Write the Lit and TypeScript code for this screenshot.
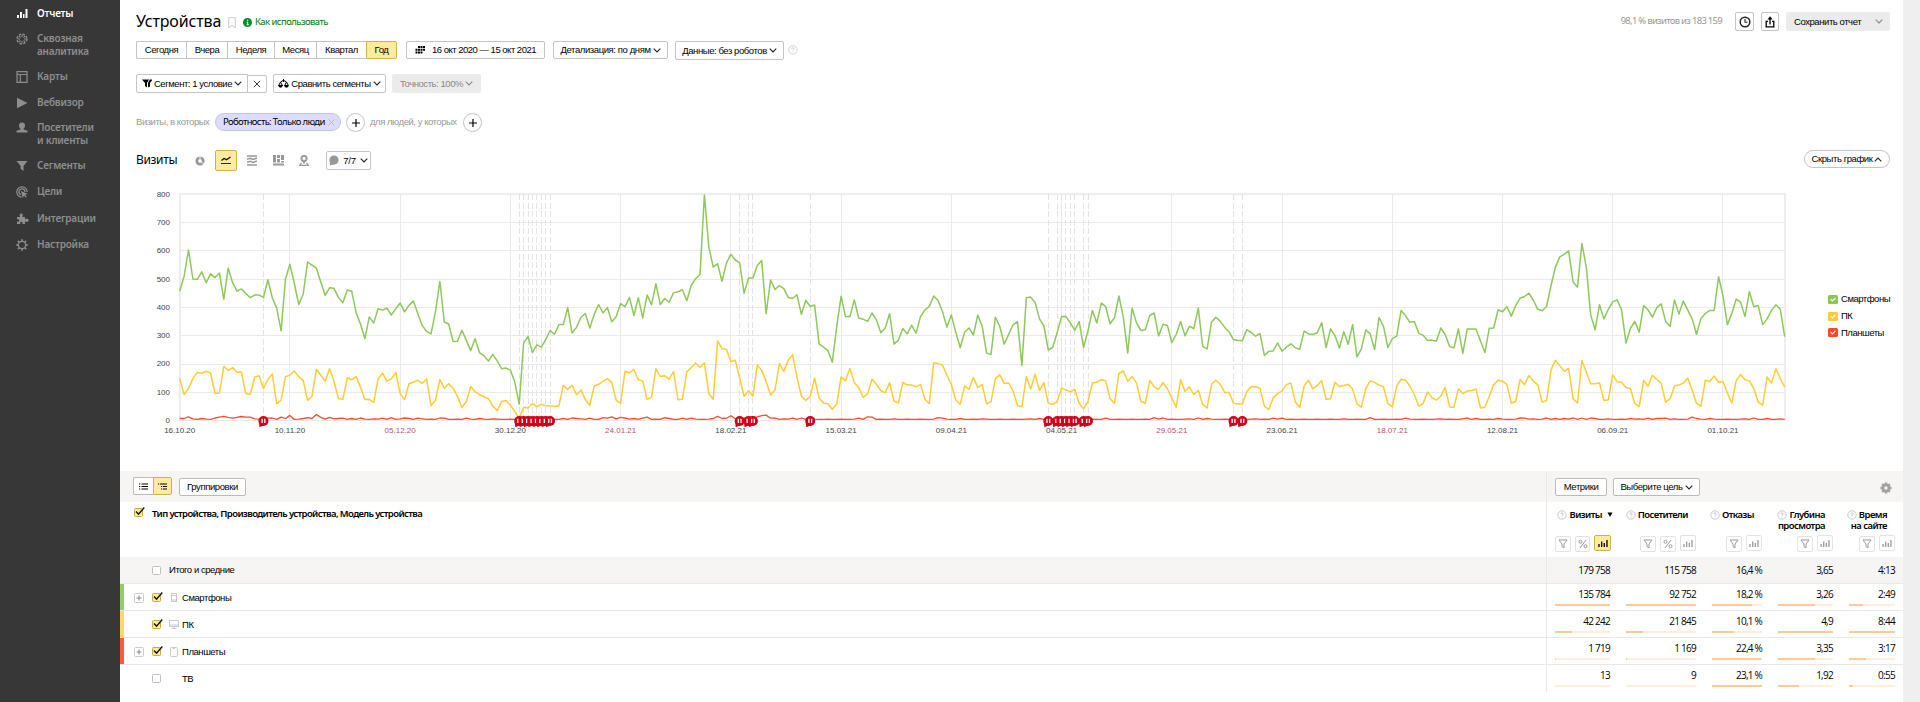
import { LitElement, html, svg, css, nothing } from "lit";

const PHONES = [
  457,510,602,500,499,525,487,518,505,521,429,538,487,457,465,449,434,443,443,435,497,434,397,317,500,
  552,484,410,447,560,549,538,489,442,469,467,435,416,461,457,381,341,289,366,345,395,390,397,372,396,
  415,384,407,422,378,336,315,306,383,491,348,341,279,280,319,284,247,289,240,229,210,234,211,183,185,
  178,135,58,273,297,240,267,259,286,318,305,339,339,399,309,329,365,378,327,375,410,380,399,349,367,
  413,402,435,371,434,363,443,409,483,410,431,418,451,455,462,423,477,501,516,797,614,542,554,492,557,
  587,567,557,449,504,504,548,565,377,496,463,477,466,435,431,444,375,425,403,408,271,259,247,206,331,
  439,367,367,426,362,358,350,380,356,310,327,377,270,284,325,306,336,309,367,391,403,440,424,385,330,
  373,313,258,312,327,302,373,333,238,233,365,332,270,305,338,349,194,434,436,417,359,334,249,258,311,
  367,367,344,319,349,258,317,389,344,415,402,342,363,440,365,239,397,345,318,321,371,380,299,340,336,
  275,304,350,299,333,325,397,261,253,347,365,350,329,313,286,283,283,321,311,298,307,230,244,246,274,
  245,259,271,257,252,316,306,304,310,346,258,324,301,256,314,269,339,225,253,321,306,251,364,333,258,
  289,298,389,371,347,350,309,301,283,284,280,327,304,261,257,324,237,323,323,323,281,240,326,327,391,
  384,403,369,406,432,438,450,424,393,388,403,477,542,578,587,600,489,471,625,542,373,320,409,359,393,
  419,426,391,274,325,350,312,406,391,365,399,412,350,332,426,376,422,391,359,305,360,378,389,389,508,
  440,339,378,429,418,367,455,402,406,339,359,389,409,393,296,
];

const DESKTOPS = [
  148,92,113,148,170,167,174,168,95,97,191,177,187,170,171,95,93,153,158,113,145,164,59,72,155,
  160,175,154,142,71,86,181,160,139,183,139,78,75,151,144,155,118,74,75,64,146,167,139,147,170,
  95,74,130,135,142,131,147,53,71,145,114,130,114,85,46,66,120,102,91,84,77,51,35,67,71,
  54,31,8,47,44,60,49,57,52,52,49,52,124,110,124,91,108,74,53,122,128,138,148,134,71,
  60,174,168,181,144,140,75,81,183,155,158,145,173,73,75,172,187,203,187,204,95,75,281,254,251,
  208,213,150,86,105,86,196,177,138,90,108,201,174,213,233,152,86,71,85,150,80,61,59,40,58,
  154,141,184,134,117,82,94,146,128,106,98,133,69,62,135,126,125,119,128,75,60,204,201,196,159,
  128,73,57,122,110,152,117,127,59,66,148,161,131,132,104,53,48,155,111,164,106,134,61,57,68,
  114,108,101,110,60,41,67,133,135,145,140,77,61,166,175,139,155,133,67,61,142,119,110,134,112,
  78,47,145,102,119,92,107,57,44,128,142,128,99,99,61,58,58,102,119,119,114,51,39,80,95,
  105,127,133,66,46,122,142,112,124,141,75,77,135,120,124,128,111,59,47,113,140,135,125,119,60,
  48,122,146,142,122,92,51,60,101,81,72,86,117,48,47,112,95,104,106,111,44,47,86,127,142,
  139,128,62,67,145,127,159,139,126,65,71,178,213,194,174,184,77,62,212,171,130,130,133,71,73,
  161,137,135,117,113,60,49,142,121,160,145,131,65,77,122,125,132,150,108,61,51,142,138,157,135,
  138,97,61,140,163,144,140,113,65,54,154,132,183,148,119,
];

const TABLET_PEAKS: Record<number, number> = {
  0: 7, 1: 7, 2: 13, 3: 6, 5: 7, 8: 9, 9: 12, 10: 15, 11: 11, 12: 8, 13: 11, 14: 14, 15: 12, 16: 12, 17: 6, 20: 8, 21: 9,
  23: 12, 24: 7, 25: 18, 28: 7, 29: 10, 30: 7, 31: 21, 32: 11, 34: 11, 35: 6, 36: 7, 37: 8, 39: 7, 41: 9, 44: 6, 46: 8, 48: 10,
  50: 6, 51: 9, 52: 7, 54: 8, 55: 6, 59: 9, 60: 8, 65: 8, 68: 7, 71: 6, 79: 9, 83: 8, 87: 7, 89: 9, 90: 7, 91: 6, 93: 8, 96: 10,
  97: 8, 98: 13, 99: 6, 100: 11, 101: 9, 103: 7, 105: 8, 106: 12, 110: 10, 111: 7, 114: 8, 116: 8, 121: 7, 122: 15, 123: 7, 124: 8,
  125: 17, 126: 6, 128: 9, 130: 8, 131: 13, 132: 17, 133: 19, 134: 8, 135: 8, 137: 6, 139: 8, 141: 9, 143: 8, 154: 8, 156: 13, 157: 12,
  162: 6, 172: 10, 173: 8, 177: 7, 182: 6, 193: 6, 195: 7, 201: 6, 210: 8, 221: 10, 223: 9, 229: 6, 231: 9, 233: 7, 244: 6, 248: 8,
  250: 8, 264: 6, 270: 10, 278: 8, 286: 6, 291: 6, 292: 8, 294: 7, 299: 7, 304: 9, 305: 8, 307: 6, 310: 9, 312: 7, 314: 7, 316: 9,
  318: 9, 320: 9, 321: 7, 324: 6, 329: 7, 331: 6, 333: 8, 335: 7, 336: 7, 337: 8, 339: 6, 343: 12, 344: 7, 347: 7, 355: 6, 357: 9,
  360: 7, 363: 6,
};
const TABLETS = PHONES.map((_, day) => TABLET_PEAKS[day] ?? (day % 3 === 0 ? 5 : 4));

const EVENTS = [19, 77, 78, 79, 80, 81, 82, 83, 84, 127, 129, 130, 143, 197, 199, 200, 201, 202, 203, 205, 206, 239, 241];

const TICKS: [string, boolean][] = [
  ["16.10.20", false], ["10.11.20", false], ["05.12.20", true], ["30.12.20", false], ["24.01.21", true],
  ["18.02.21", false], ["15.03.21", false], ["09.04.21", false], ["04.05.21", false], ["29.05.21", true],
  ["23.06.21", false], ["18.07.21", true], ["12.08.21", false], ["06.09.21", false], ["01.10.21", false],
];

// Chart geometry, relative to the chart's own top-left corner
const LEFT = 43.7;
const TOP = 14;
const STEP = 1605 / 364;
const BASE = 240.5;
const UNIT = 0.283;
const px = (day: number) => LEFT + day * STEP;
const py = (v: number) => BASE - v * UNIT;
const gridY = (v: number) => Math.round(py(v) - 0.4) + 0.5;
const line = (data: number[]) => data.map((v, i) => `${px(i).toFixed(1)},${py(v).toFixed(1)}`).join(" ");

const chevron = html`<svg class="chev" width="8" height="5" viewBox="0 0 8 5"><path d="M.7 .7 4 4 7.3 .7" /></svg>`;
const chevronUp = html`<svg class="chev" width="8" height="5" viewBox="0 0 8 5"><path d="M.7 4.3 4 1 7.3 4.3" /></svg>`;
const help = html`<svg class="help" width="10" height="10" viewBox="0 0 10 10"><circle cx="5" cy="5" r="4.2" /><path d="M3.7 4.1Q3.8 2.8 5 2.8T6.2 4Q6.2 4.6 5 5.3V6M5 6.8v.8" /></svg>`;
const plus = html`<svg width="10" height="10" viewBox="0 0 10 10"><path d="M5 1v8M1 5h8" stroke="#000" stroke-width="1.2" /></svg>`;
const funnel = html`<svg width="10" height="10" viewBox="0 0 10 10"><path d="M1 1h8L6 5v4L4 7.5V5z" fill="none" stroke="#999" /></svg>`;
const percent = html`<svg width="10" height="10" viewBox="0 0 10 10" fill="none" stroke="#999"><circle cx="2.5" cy="2.8" r="1.5" /><circle cx="7.5" cy="7.2" r="1.5" /><path d="M8 1 2 9" /></svg>`;
const bars = (c: string) => html`<svg width="10" height="8" viewBox="0 0 10 8"><path d="M1 8V5M3.7 8V2.5M6.3 8V4M9 8V1" stroke="${c}" stroke-width="1.3" /></svg>`;

const menuIcons: Record<string, unknown> = {
  reports: svg`<path d="M1 7h2v3H1zM4 4h2v6H4zM7 6h1.500v4H7zM9.500 1H11.500v9H9.500z"/>`,
  cross: svg`<g fill="none" stroke="currentColor" stroke-width="1.500"><circle cx="6" cy="6" r="4.900" stroke-dasharray="2.300 1.550"/><path d="M6 1.500v2.600M6 7.900v2.600M1.500 6h2.600M7.900 6h2.600M2.800 2.800l1.700 1.700M7.500 7.500l1.700 1.700M9.200 2.800 7.500 4.500M4.500 7.500 2.800 9.200" stroke-width="1.100"/></g>`,
  maps: svg`<path d="M1 .7h10v10.600H1zM1 3.500h10M4.300 3.500v7.800" fill="none" stroke="currentColor" stroke-width="1.200"/>`,
  play: svg`<path d="M1 .8 11.500 6 1 11.200z"/>`,
  user: svg`<path d="M6 .5c2 0 3 1.200 3 2.900C9 5 8.300 6 7.500 6.600v1l4 1.200V10.500H.5V8.800l4-1.200v-1C3.700 6 3 5 3 3.400 3 1.700 4 .5 6 .5z"/>`,
  segments: svg`<path d="M.5 1h11L7.500 6v5L4.700 8.900V6z"/>`,
  goals: svg`<g fill="none" stroke="currentColor" stroke-width="1.200"><path d="M5.500 11.200A5.200 5.200 0 1 1 11.200 6"/><path d="M5 8.700A3 3 0 1 1 9 6"/></g><path d="M5 5l6.800 3-2.700.8 1.700 2.200-1 .7-1.700-2.200L6.700 12z"/>`,
  puzzle: svg`<path d="M1 4h3.200C3 2 3.800.5 5.200.5S7.400 2 6.300 4H9v2.200c2-1 3.700-.3 3.700 1.100S11 9.500 9 8.500V11H6.300c.8-1.500.1-2.300-.9-2.300S3.700 9.500 4.500 11H1V8.500c1.600.5 2.200-.2 2.200-1.100S2.600 5.800 1 6.300z"/>`,
  gear: svg`<circle cx="6" cy="6" r="3.700" fill="none" stroke="currentColor" stroke-width="1.300"/><path d="M6 2V.2M6 10v1.800M2 6H.2M10 6h1.800M3.200 3.200 1.900 1.900M8.800 8.800l1.300 1.300M8.800 3.200l1.300-1.300M3.200 8.800 1.900 10.100" stroke="currentColor" stroke-width="1.700"/>`,
};

const MENU: [string, string[]][] = [
  ["reports", ["Отчеты"]], ["cross", ["Сквозная", "аналитика"]], ["maps", ["Карты"]], ["play", ["Вебвизор"]],
  ["user", ["Посетители", "и клиенты"]], ["segments", ["Сегменты"]], ["goals", ["Цели"]],
  ["puzzle", ["Интеграции"]], ["gear", ["Настройка"]],
];

const COLUMNS = [
  { title: ["Визиты"], sorted: true, percent: true },
  { title: ["Посетители"], percent: true },
  { title: ["Отказы"] },
  { title: ["Глубина", "просмотра"] },
  { title: ["Время", "на сайте"] },
] as { title: string[]; sorted?: boolean; percent?: boolean }[];

const deviceIcons: Record<string, unknown> = {
  phone: svg`<rect x="2.500" y=".5" width="5" height="8"/><path d="M2.500 2.500h5M2.500 7h5"/>`,
  desktop: svg`<path d="M.5 .5h9v6h-9zM.5 5h9M5 6.500v2M2.500 8.500h5"/>`,
  tablet: svg`<rect x="1.500" y=".5" width="7" height="9" rx="1"/><path d="M4 1.500h2M4.500 8h1"/>`,
};

interface Row { name: string; stripe: string; expand: boolean; checked: boolean; icon?: string; cells: string[]; shares: number[]; }
const ROWS: Row[] = [
  { name: "Смартфоны", stripe: "green", expand: true, checked: true, icon: "phone", cells: ["135 784", "92 752", "18,2 %", "3,26", "2:49"], shares: [100, 100, 80, 67, 30] },
  { name: "ПК", stripe: "yellow", expand: false, checked: true, icon: "desktop", cells: ["42 242", "21 845", "10,1 %", "4,9", "8:44"], shares: [31, 24, 44, 100, 100] },
  { name: "Планшеты", stripe: "red", expand: true, checked: true, icon: "tablet", cells: ["1 719", "1 169", "22,4 %", "3,35", "3:17"], shares: [1.5, 1.3, 98, 67, 37] },
  { name: "ТВ", stripe: "none", expand: false, checked: false, cells: ["13", "9", "23,1 %", "1,92", "0:55"], shares: [0, 0, 100, 38, 9] },
];

class SideMenu extends LitElement {
  static styles = css`
    :host { display: block; width: 120px; height: 702px; background: #373737; box-sizing: border-box; padding-top: 7px; flex: none; }
    .item { display: grid; grid-template-columns: 12px 1fr; column-gap: 9px; padding-left: 16px; margin-bottom: 12px; color: #8e8e8e;
      font: 600 10px/13px "Noto Sans", sans-serif; letter-spacing: -.2px; }
    .item svg { display: block; margin-top: 1px; overflow: visible; }
    .item.active { color: #fff; }
    .label { white-space: nowrap; }
    .line { display: block; }
    .i2, .i5, .i7 { margin-bottom: 13px; }
    .i6 { margin-bottom: 14px; }
  `;
  render() {
    return MENU.map(([icon, lines], i) => html`
      <div class="item i${i} ${i === 0 ? "active" : ""}">
        <svg width="12" height="12" viewBox="0 0 12 12" fill="currentColor">${menuIcons[icon]}</svg>
        <span class="label">${lines.map((l) => html`<span class="line">${l}</span>`)}</span>
      </div>`);
  }
}
customElements.define("side-menu", SideMenu);

class VisitsChart extends LitElement {
  static styles = css`
    :host { display: block; width: 1664px; height: 280px; flex: none; }
    svg { display: block; overflow: visible; }
    .axis { font: 8px "Liberation Sans", Arial, sans-serif; fill: #444; }
    .off { fill: #b8536a; }
    .grid { stroke: #eaeaea; shape-rendering: crispEdges; }
    .frame { stroke: #eeeeee; stroke-width: 2; fill: none; shape-rendering: crispEdges; }
    .event { stroke: #e4e4e4; stroke-dasharray: 6 2.5; shape-rendering: crispEdges; }
    .series { fill: none; stroke-width: 1.5; stroke-linejoin: round; }
    .phones { stroke: #8cc85a; }
    .desktops { stroke: #ffcc33; }
    .tablets { stroke: #ff4b2b; stroke-width: 1.3; }
    .pin { fill: #d0021b; }
    .bar { fill: #fff; }
  `;
  render() {
    const end = px(364);
    return html`<svg width="1664" height="280" viewBox="0 0 1664 280">
      ${[0, 1, 2, 3, 4, 5, 6, 7].map((n) => svg`
        <line class="grid" x1=${LEFT} x2=${end} y1=${gridY(n * 100)} y2=${gridY(n * 100)}></line>`)}
      ${[0, 1, 2, 3, 4, 5, 6, 7, 8].map((n) => svg`
        <text class="axis" x="34" y=${py(n * 100) + 2.5} text-anchor="end">${n * 100}</text>`)}
      <path class="frame" d="M${LEFT} ${BASE}V${TOP}H${end}V${BASE}"></path>
      ${TICKS.map((_, i) => svg`
        <line class="grid" x1=${px(i * 25)} x2=${px(i * 25)} y1=${TOP} y2=${BASE}></line>`)}
      ${EVENTS.map((d) => svg`<line class="event" x1=${px(d)} x2=${px(d)} y1=${TOP} y2=${BASE}></line>`)}
      <polyline class="series tablets" points=${line(TABLETS)}></polyline>
      <polyline class="series desktops" points=${line(DESKTOPS)}></polyline>
      <polyline class="series phones" points=${line(PHONES)}></polyline>
      ${EVENTS.map((d) => svg`<g transform="translate(${px(d)} 241)">
        <circle class="pin" r="5"></circle><path class="pin" d="M-4.500 1-4 6.200 0 4.500z"></path>
        <path class="bar" d="M-2-2.200h1.300v4.200H-2zM.7-2.200H2v4.200H.7z"></path></g>`)}
      ${TICKS.map(([t, off], i) => svg`
        <text class="axis ${off ? "off" : ""}" x=${px(i * 25)} y="253" text-anchor="middle">${t}</text>`)}
    </svg>`;
  }
}
customElements.define("visits-chart", VisitsChart);

class DeviceTable extends LitElement {
  static styles = css`
    :host { display: block; font: 9.5px/12px "Noto Sans", sans-serif; color: #000; letter-spacing: -.5px; }
    .row { display: grid; grid-template-columns: 1426px 357px; box-sizing: border-box; }
    .row > div { box-sizing: border-box; }
    .side { border-left: 1px solid #e8e8e8; }
    .tools { height: 31px; background: #f6f5f3; }
    .tools > div { display: flex; align-items: flex-start; padding-top: 7px; }
    .tools .main { padding: 6px 0 0 13px; }
    .tools .side { padding-left: 8px; }
    .btn { box-sizing: border-box; height: 18px; border: 1px solid #bbb; border-radius: 2px; background: #fff; display: flex; align-items: center; justify-content: center;
      font: 9.5px/16px "Liberation Sans", Arial, sans-serif; letter-spacing: -.4px; white-space: nowrap; }
    .list { width: 20px; border-radius: 2px 0 0 2px; border-right: 0; }
    .tree { width: 19px; background: #ffeba0; border-color: #ccb350; border-radius: 0 2px 2px 0; }
    .groups { width: 67px; margin: 1px 0 0 7px; }
    .metrics { width: 52px; }
    .goal { width: 87px; margin-left: 6px; gap: 2px; }
    .chev path { fill: none; stroke: #222; stroke-width: 1.1; }
    .gear { margin: 4px 11px 0 auto; display: block; }
    .head { height: 55px; }
    .head .main { display: flex; padding: 6px 0 0 14px; gap: 9px; font-weight: 600; letter-spacing: -.6px; white-space: nowrap; }
    .metricsgrid { display: grid; grid-template-columns: 55px 70px 50px 55px 46px; column-gap: 16px; padding-left: 8px; }
    .th { height: 55px; display: flex; flex-direction: column; justify-content: space-between; box-sizing: border-box; padding: 7px 0 5px; }
    .title { font: 600 9.5px/11px "Noto Sans", sans-serif; letter-spacing: -.56px; text-align: right; padding-right: 8px; white-space: nowrap; display: flex; flex-direction: column; align-items: flex-end; }
    .first { display: flex; align-items: center; gap: 2px; }
    .arrow { width: 0; margin-left: -2px; overflow: visible; }
    .arrow svg { display: block; margin-left: 5px; }
    .help { fill: none; stroke: #bcbcbc; stroke-width: .8; flex: none; }
    .icons { display: flex; justify-content: flex-end; gap: 4px; align-items: flex-end; }
    .ib { width: 16px; height: 16px; border: 1px solid #e3e3e3; border-radius: 2px; display: flex; align-items: center; justify-content: center; box-sizing: border-box; }
    .ib.up { margin-bottom: 1px; }
    .ib.on { background: #ffeba0; border-color: #ccb350; width: 17px; margin-right: -1px; }
    .total { height: 27px; background: #f6f5f3; border-bottom: 1px solid #e8e8e8; }
    .data { height: 27px; border-bottom: 1px solid #e8e8e8; }
    .data.last { border-bottom: 0; }
    .name { display: flex; align-items: center; height: 26px; letter-spacing: -.44px; font-family: "Liberation Sans", Arial, sans-serif; }
    .data .name { padding-top: 1px; }
    .total .name { padding-left: 32px; gap: 8px; }
    .stripe { width: 4px; height: 26px; margin: -1px 10px 0 0; }
    .green { background: #97cc64; } .yellow { background: #ffd963; } .red { background: #ff5a3c; }
    .exp { width: 10px; height: 10px; box-sizing: border-box; border: 1px solid #ccc; border-radius: 1.5px; margin-right: 8px; display: flex; }
    .exp.hide { visibility: hidden; }
    .box { width: 9px; height: 9px; box-sizing: border-box; border: 1px solid #bfbfbf; border-radius: 1.5px; background: #fff; flex: none; }
    .box.on { background: #ffeba0; border-color: #c9a93c; }
    .box svg { display: block; overflow: visible; }
    .dev { width: 10px; margin: 0 3px 0 8px; display: block; fill: none; stroke: #c9c9c9; flex: none; }
    .cell { text-align: right; white-space: nowrap; padding-top: 4px; font: 10px/12px "Open Sans", "Noto Sans", sans-serif; letter-spacing: -.72px; word-spacing: -.2px; }
    .total .cell { padding-top: 7px; }
    .track { height: 2px; background: #ffeeda; margin-top: 4px; }
    .fill { height: 2px; background: #ffca94; }
  `;
  box(on: boolean) {
    return html`<div class="box ${on ? "on" : ""}">${on ? html`<svg width="7" height="7" viewBox="0 0 7 7"><path d="M1 2.500 3.500 5.300 9.300-1.500" fill="none" stroke="#111" stroke-width="1.400" /></svg>` : nothing}</div>`;
  }
  render() {
    return html`
      <div class="row tools">
        <div class="main">
          <div class="btn list"><svg width="9" height="7" viewBox="0 0 9 7"><path d="M0 1h1.200M2.500 1H9M0 3.500h1.200M2.500 3.500H9M0 6h1.200M2.500 6H9" stroke="#000" /></svg></div>
          <div class="btn tree"><svg width="9" height="7" viewBox="0 0 9 7"><path d="M0 1h1.200M2 1H9M3 3.500h1.200M5 3.500H9M3 6h1.200M5 6H9" stroke="#000" /></svg></div>
          <div class="btn groups">Группировки</div>
        </div>
        <div class="side">
          <div class="btn metrics">Метрики</div>
          <div class="btn goal">Выберите цель ${chevron}</div>
          <svg class="gear" width="12" height="12" viewBox="0 0 12 12"><circle cx="6" cy="6" r="3.100" fill="none" stroke="#a0a0a0" stroke-width="2.800" /><path d="M6 2V.5M6 10v1.500M2 6H.5M10 6h1.500M3.200 3.200 2.100 2.100M8.800 8.800l1.100 1.100M8.800 3.200l1.100-1.100M3.200 8.800 2.100 9.900" stroke="#a0a0a0" stroke-width="2.300" /></svg>
        </div>
      </div>
      <div class="row head">
        <div class="main">${this.box(true)}<span>Тип устройства, Производитель устройства, Модель устройства</span></div>
        <div class="side metricsgrid">
          ${COLUMNS.map((c) => html`<div class="th">
            <div class="title">
              <span class="first">${help}<span>${c.title[0]}</span>${c.sorted ? html`<span class="arrow"><svg width="6" height="5" viewBox="0 0 6 5"><path d="M.5 .5h5L3 5z" /></svg></span>` : nothing}</span>
              ${c.title[1] ? html`<span>${c.title[1]}</span>` : nothing}
            </div>
            <div class="icons">
              <div class="ib">${funnel}</div>
              ${c.percent ? html`<div class="ib">${percent}</div>` : nothing}
              <div class="ib up ${c.sorted ? "on" : ""}">${bars(c.sorted ? "#000" : "#999")}</div>
            </div>
          </div>`)}
        </div>
      </div>
      <div class="row total">
        <div class="name">${this.box(false)}<span>Итого и средние</span></div>
        <div class="side metricsgrid">${["179 758", "115 758", "16,4 %", "3,65", "4:13"].map((v) => html`<div class="cell">${v}</div>`)}</div>
      </div>
      ${ROWS.map((r, i) => html`<div class="row data ${i === 3 ? "last" : ""}">
        <div class="name">
          <div class="stripe ${r.stripe}"></div>
          <div class="exp ${r.expand ? "" : "hide"}"><svg width="8" height="8" viewBox="0 0 8 8"><path d="M4 1.500v5M1.500 4h5" stroke="#888" /></svg></div>
          ${this.box(r.checked)}
          <svg class="dev" width="10" height="10" viewBox="0 0 10 10">${r.icon ? deviceIcons[r.icon] : nothing}</svg>
          <span>${r.name}</span>
        </div>
        <div class="side metricsgrid">${r.cells.map((v, k) => html`<div class="cell">${v}<div class="track"><div class="fill" style="width:${r.shares[k]}%"></div></div></div>`)}</div>
      </div>`)}
    `;
  }
}
customElements.define("device-table", DeviceTable);

class AppRoot extends LitElement {
  static styles = css`
    :host { display: flex; width: 1920px; height: 702px; overflow: hidden; background: #efefef; font: 9.5px/16px "Liberation Sans", Arial, sans-serif; color: #000; }
    .page { width: 1783px; height: 702px; background: #fff; }
    .bar { display: flex; align-items: flex-start; box-sizing: border-box; padding-left: 16px; padding-right: 13px; white-space: nowrap; }
    .top { height: 41px; padding-top: 12px; }
    h1 { margin: -2px 7px 0 0; font: 400 16px/22px "Noto Sans", sans-serif; letter-spacing: -.15px; width: 85px; }
    .mark { margin: 5px 7px 0 0; }
    .info { margin: 6px 3px 0 0; }
    .how { color: #007a00; font: 9.5px/12px "Noto Sans", sans-serif; letter-spacing: -.55px; margin-top: 4px; }
    .count { margin-left: auto; color: #999; font: 9.5px/18px "Noto Sans", sans-serif; letter-spacing: -.72px; margin-right: 13px; }
    .btn { box-sizing: border-box; height: 18px; border: 1px solid #c4c4c4; border-radius: 2px; display: flex; align-items: center; justify-content: center; letter-spacing: -.43px; gap: 2px; background: #fff; flex: none; }
    .h19 { height: 19px; }
    .sq { width: 19px; margin-right: 7px; }
    .share { width: 18px; }
    .gray { background: #ebebeb; border-color: #ebebeb; }
    .save { width: 104px; justify-content: space-between; padding: 0 6px 0 7px; }
    .save .chev path, .dim .chev path { stroke: #888; }
    .chev path { fill: none; stroke: #222; stroke-width: 1.1; }
    .periods { height: 33px; }
    .seg { border-right-width: 0; border-radius: 0; }
    .p0 { width: 50px; border-radius: 2px 0 0 2px; } .p1 { width: 41px; } .p2 { width: 47px; } .p3 { width: 42px; } .p4 { width: 50px; }
    .p5 { width: 31px; background: #ffeba0; border: 1px solid #ccb350; border-radius: 0 2px 2px 0; margin-right: 9px; }
    .date { width: 139px; gap: 7px; letter-spacing: -.5px; margin-right: 8px; }
    .detail { width: 115px; margin-right: 7px; letter-spacing: -.4px; }
    .robots { width: 109px; margin-right: 4px; }
    .help { fill: none; stroke: #c8c8c8; stroke-width: .8; margin-top: 4px; }
    .filters { height: 39px; }
    .segment { width: 112px; border-radius: 2px 0 0 2px; letter-spacing: -.45px; }
    .close { width: 20px; height: 18px; margin: 1px 6px 0 -1px; border-radius: 0 2px 2px 0; }
    .compare { width: 113px; margin-right: 6px; }
    .dim { width: 89px; color: #888; }
    .conds { height: 37px; color: #999; line-height: 18px; letter-spacing: -.46px; }
    .pill { box-sizing: border-box; height: 18px; width: 126px; border-radius: 9px; border: 1px solid #c5c2f0; background: #dddcff; color: #000; display: flex; align-items: center; padding: 0 5px 0 7px; justify-content: space-between; font: 9.5px/16px "Noto Sans", sans-serif; letter-spacing: -.65px; margin: 0 5px; }
    .add { box-sizing: border-box; width: 19px; height: 19px; border: 1px solid #c4c4c4; border-radius: 50%; display: flex; align-items: center; justify-content: center; }
    .w74 { width: 74px; } .w86 { width: 86px; margin: 0 7px 0 5px; }
    .view { height: 30px; }
    h2 { margin: 0; font: 400 12px/20px "Noto Sans", sans-serif; letter-spacing: -.35px; width: 53px; }
    .vi { width: 22px; height: 21px; display: flex; align-items: center; justify-content: center; margin-right: 4px; }
    .vi.on { box-sizing: border-box; background: #ffeba0; border: 1px solid #ccb350; border-radius: 2px; }
    .notes { width: 45px; height: 19px; margin: 1px 0 0 7px; gap: 4px; letter-spacing: -.2px; }
    .hide { width: 86px; border-radius: 9px; margin-left: auto; }
    .plot { display: flex; height: 291px; padding-left: 16px; box-sizing: border-box; }
    .legend { margin: 111px 0 0 28px; }
    .li { display: flex; align-items: center; gap: 3px; height: 16.7px; letter-spacing: -.47px; }
    .sw { width: 10px; height: 9px; border-radius: 1.5px; display: flex; justify-content: center; align-items: center; flex: none; }
    .g { background: #8cc656; } .y { background: #ffcc33; } .r { background: #ff4728; }
  `;
  render() {
    const periods = ["Сегодня", "Вчера", "Неделя", "Месяц", "Квартал", "Год"];
    return html`
      <side-menu></side-menu>
      <main class="page">
        <div class="bar top">
          <h1>Устройства</h1>
          <svg class="mark" width="8" height="12" viewBox="0 0 8 12"><path d="M.7 .7h6.600V11L4 8 .7 11z" fill="none" stroke="#ccc" /></svg>
          <svg class="info" width="9" height="9" viewBox="0 0 9 9"><circle cx="4.500" cy="4.500" r="4.500" fill="#078a2e" /><path d="M4.700 1.700v1.200M3.700 4h1v3M3.500 6.800h2.300" fill="none" stroke="#fff" /></svg>
          <span class="how">Как использовать</span>
          <span class="count">98,1 % визитов из 183 159</span>
          <div class="btn h19 sq"><svg width="12" height="12" viewBox="0 0 12 12" fill="none" stroke="#222"><circle cx="6" cy="6" r="4.800" stroke-width="1.500" /><path d="M6 3v3.300h2.500" stroke-width="1.100" /></svg></div>
          <div class="btn h19 sq share"><svg width="10" height="12" viewBox="0 0 10 12" fill="none" stroke="#000" stroke-width="1.300"><path d="M3 5.300H1.200v5.500h7.600V5.300H7M5 8.500V2" /><path d="M2.500 3.500 5 .3l2.500 3.200z" fill="#000" stroke="none" /></svg></div>
          <div class="btn h19 gray save">Сохранить отчет ${chevron}</div>
        </div>
        <div class="bar periods">
          ${periods.map((p, i) => html`<div class="btn seg p${i}">${p}</div>`)}
          <div class="btn date"><svg width="10" height="8" viewBox="0 0 10 8"><path d="M3 0h2v2H3zM5.500 0h2v2h-2zM8 0h2v2H8zM.5 2.700h2v2h-2zM3 2.700h2v2H3zM5.500 2.700h2v2h-2zM8 2.700h2v2H8zM.5 5.400h2v2h-2zM3 5.400h2v2H3zM5.500 5.400h2v2h-2z" /></svg>16 окт 2020 — 15 окт 2021</div>
          <div class="btn detail">Детализация: по дням ${chevron}</div>
          <div class="btn h19 robots">Данные: без роботов ${chevron}</div>
          ${help}
        </div>
        <div class="bar filters">
          <div class="btn h19 segment"><svg width="10" height="9" viewBox="0 0 10 9"><path d="M0 .5h7L5 4v4.500L3 7V4zM7.800 .5H10v1L8 4v3.500L6 8.500V4z" /></svg>Сегмент: 1 условие ${chevron}</div>
          <div class="btn close"><svg width="8" height="8" viewBox="0 0 8 8"><path d="M.8 .8l6.400 6.400M7.200 .8.8 7.200" stroke="#222" stroke-width=".9" /></svg></div>
          <div class="btn h19 compare"><svg width="11" height="9" viewBox="0 0 11 9"><path d="M2.500 3 .7 6.500h3.600zM8.500 3 6.700 6.500h3.600zM2.500 3l3-1.800 3 1.800M5.500 0v3" fill="none" stroke="#000" /><path d="M.2 6h4.600Q4.500 8.700 2.500 8.700T.2 6zM6.200 6h4.600Q10.500 8.700 8.500 8.700T6.200 6z" /></svg>Сравнить сегменты ${chevron}</div>
          <div class="btn h19 gray dim">Точность: 100% ${chevron}</div>
        </div>
        <div class="bar conds">
          <span class="w74">Визиты, в которых</span>
          <span class="pill">Роботность: Только люди <svg width="7" height="7" viewBox="0 0 7 7"><path d="M.5 .5l6 6M6.500 .5l-6 6" stroke="#aaa9cf" stroke-width=".8" /></svg></span>
          <span class="add">${plus}</span>
          <span class="w86">для людей, у которых</span>
          <span class="add">${plus}</span>
        </div>
        <div class="bar view">
          <h2>Визиты</h2>
          <div class="vi"><svg width="10" height="10" viewBox="0 0 10 10"><circle cx="5" cy="5" r="3.200" fill="none" stroke="#999" stroke-width="2.800" /><path d="M5 5V0M5 5 9.500 8.500" stroke="#fff" stroke-width=".9" /></svg></div>
          <div class="vi on"><svg width="10" height="9" viewBox="0 0 10 9" fill="none" stroke="#111"><path d="M.5 4.500 3 2.500l2.500 1.200L9.500 1" stroke-width="1.300" /><path d="M0 7.500h10" stroke-width=".9" /></svg></div>
          <div class="vi"><svg width="10" height="11" viewBox="0 0 10 11" fill="none" stroke="#999" stroke-width="1.500"><path d="M0 1h10M0 4.200l3-.9 3 1.200 4-1.500M0 7.200l3-.9 3 1.200L10 6M0 10h10" /></svg></div>
          <div class="vi"><svg width="11" height="11" viewBox="0 0 11 11"><path d="M0 0h3v7.500H0zM4 0h3v3H4zM4 4h3v3.500H4zM8 0h3v5H8zM8 6h3v1.500H8zM0 8.500h11v2H0z" fill="#999" /></svg></div>
          <div class="vi"><svg width="10" height="11" viewBox="0 0 10 11" fill="none" stroke="#999"><circle cx="5" cy="3.500" r="2.600" stroke-width="1.900" /><path d="M5 6v2.500" stroke-width="2.200" /><path d="M2.500 7.800.8 10.300h8.400L7.500 7.800" stroke-width="1.200" /></svg></div>
          <div class="btn notes"><svg width="10" height="11" viewBox="0 0 10 11"><circle cx="5" cy="5" r="4.600" fill="#999" /><path d="M1 6 .8 10.500 6 9z" fill="#999" /></svg>7/7 ${chevron}</div>
          <div class="btn hide">Скрыть график ${chevronUp}</div>
        </div>
        <div class="plot">
          <visits-chart></visits-chart>
          <div class="legend">
            ${[["g", "Смартфоны"], ["y", "ПК"], ["r", "Планшеты"]].map(([c, t]) => html`<div class="li"><span class="sw ${c}"><svg width="6" height="5" viewBox="0 0 6 5"><path d="M.6 2.200 2.400 4 5.500 .8" fill="none" stroke="#fff" stroke-width="1.100" /></svg></span>${t}</div>`)}
          </div>
        </div>
        <device-table></device-table>
      </main>`;
  }
}
customElements.define("app-root", AppRoot);
